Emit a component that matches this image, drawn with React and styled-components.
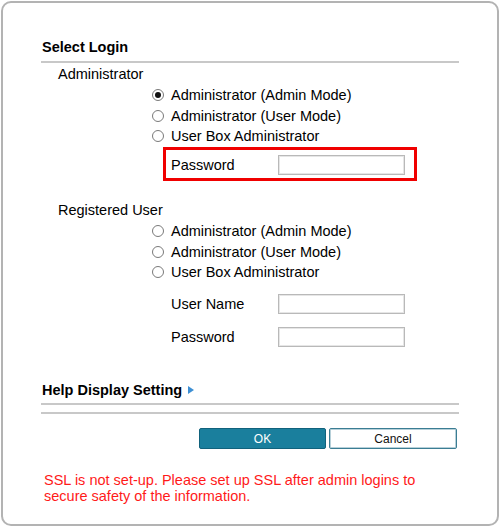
import React from "react";
import styled, { createGlobalStyle } from "styled-components";

const GlobalStyle = createGlobalStyle`
	html, body {
		margin: 0;
		padding: 0;
		background: #ffffff;
	}
	body {
		font-family: "Liberation Sans", Arial, sans-serif;
		font-size: 14.5px;
		color: #000000;
	}
	* {
		box-sizing: border-box;
	}
`;

const Frame = styled.div`
	margin: 1px;
	width: 498px;
	height: 525px;
	border: 2px solid #b3b3b3;
	border-radius: 10px;
	padding: 34px 38px 0 38px;
	background: #ffffff;
`;

const SectionTitle = styled.div`
	display: flex;
	align-items: center;
	font-weight: bold;
	font-size: 14.5px;
	line-height: 20px;
	padding: 0 0 ${(p) => p.$pb || 4}px 1px;
	border-bottom: 2px solid #c8c8c8;
`;

const Divider = styled.div`
	margin-top: 7px;
	height: 2px;
	background: #c8c8c8;
`;

const Arrow = styled.span`
	display: inline-block;
	margin-left: 6px;
	width: 0;
	height: 0;
	border-top: 4px solid transparent;
	border-bottom: 4px solid transparent;
	border-left: 6px solid #3d8fd4;
`;

const GroupLabel = styled.div`
	margin-top: ${(p) => p.$mt}px;
	padding-left: 17px;
	line-height: 20px;
	height: 20px;
`;

const RadioList = styled.div`
	margin: 1px 0 0 111px;
	display: flex;
	flex-direction: column;
`;

const RadioRow = styled.label`
	display: flex;
	align-items: center;
	height: 20.5px;
	line-height: 20px;
	cursor: pointer;
`;

const RadioCircle = styled.span`
	position: relative;
	flex: none;
	width: 12px;
	height: 12px;
	margin-right: 7px;
	border: 1px solid #7a7a7a;
	border-radius: 50%;
	background: #ffffff;

	&::after {
		content: "";
		display: ${(p) => (p.$checked ? "block" : "none")};
		position: absolute;
		left: 2px;
		top: 2px;
		width: 6px;
		height: 6px;
		border-radius: 50%;
		background: #111111;
	}
`;

const Highlight = styled.div`
	margin: 0.5px 0 0 122px;
	width: 254px;
	height: 34px;
	border: 3px solid #f00000;
	padding: 1px 0 0 5px;
	display: flex;
	align-items: center;
`;

const FieldList = styled.div`
	margin: 11.5px 0 0 130px;
	display: flex;
	flex-direction: column;
	gap: 13px;
`;

const FieldRow = styled.div`
	display: flex;
	align-items: center;
	height: 20px;
`;

const FieldLabel = styled.span`
	width: 107px;
	line-height: 20px;
`;

const Input = styled.input`
	width: 127px;
	height: 20px;
	margin: 0;
	padding: 0 3px;
	border: 1px solid #b9b9b9;
	box-shadow: inset 0 0 0 1px #e6e6e6;
	font-family: "Liberation Sans", Arial, sans-serif;
	font-size: 13px;
	outline: none;
`;

const HelpBlock = styled.div`
	margin-top: 33px;
`;

const Buttons = styled.div`
	margin-top: 14px;
	padding-right: 2px;
	display: flex;
	justify-content: flex-end;
	gap: 3px;
`;

const Button = styled.button`
	width: ${(p) => (p.$primary ? 127 : 128)}px;
	height: 21px;
	margin: 0;
	padding: 0;
	font-family: "Liberation Sans", Arial, sans-serif;
	font-size: 12px;
	border-radius: 2px;
	cursor: pointer;
	color: ${(p) => (p.$primary ? "#ffffff" : "#111111")};
	border: 1px solid ${(p) => (p.$primary ? "#11627c" : "#3b7d93")};
	background-color: ${(p) => (p.$primary ? "#1a7f9d" : "#ffffff")};
	background-image: ${(p) =>
		p.$primary
			? "radial-gradient(rgba(255,255,255,0.08) 0.6px, transparent 0.7px)"
			: "none"};
	background-size: 2px 2px;
	box-shadow: ${(p) => (p.$primary ? "none" : "inset 0 0 0 1px #b7d0d9")};
`;

const Warning = styled.p`
	margin: 22.5px 0 0 0;
	padding-left: 3px;
	color: #ff1a1a;
	font-size: 14.5px;
	line-height: 16px;
`;

const Radio = ({ checked, children }) => (
	<RadioRow>
		<RadioCircle $checked={checked} />
		{children}
	</RadioRow>
);

const App = () => {
	return (
		<>
			<GlobalStyle />
			<Frame>
				<SectionTitle>Select Login</SectionTitle>

				<GroupLabel $mt={1}>Administrator</GroupLabel>
				<RadioList>
					<Radio checked>Administrator (Admin Mode)</Radio>
					<Radio>Administrator (User Mode)</Radio>
					<Radio>User Box Administrator</Radio>
				</RadioList>
				<Highlight>
					<FieldLabel>Password</FieldLabel>
					<Input type="password" />
				</Highlight>

				<GroupLabel $mt={19}>Registered User</GroupLabel>
				<RadioList>
					<Radio>Administrator (Admin Mode)</Radio>
					<Radio>Administrator (User Mode)</Radio>
					<Radio>User Box Administrator</Radio>
				</RadioList>
				<FieldList>
					<FieldRow>
						<FieldLabel>User Name</FieldLabel>
						<Input type="text" />
					</FieldRow>
					<FieldRow>
						<FieldLabel>Password</FieldLabel>
						<Input type="password" />
					</FieldRow>
				</FieldList>

				<HelpBlock>
					<SectionTitle $pb={3}>
						Help Display Setting
						<Arrow />
					</SectionTitle>
					<Divider />
				</HelpBlock>

				<Buttons>
					<Button $primary>OK</Button>
					<Button>Cancel</Button>
				</Buttons>

				<Warning>
					SSL is not set-up. Please set up SSL after admin logins to
					<br />
					secure safety of the information.
				</Warning>
			</Frame>
		</>
	);
};

export default App;
